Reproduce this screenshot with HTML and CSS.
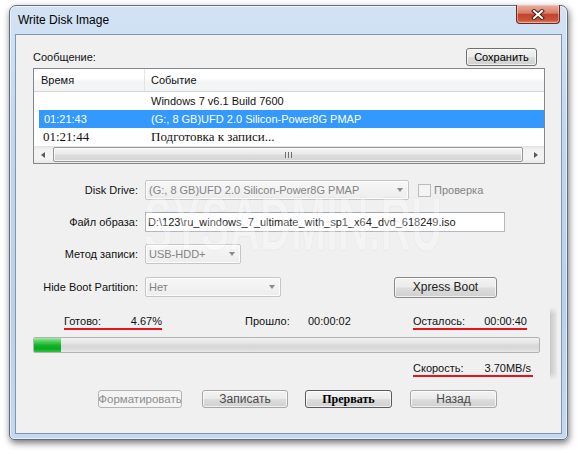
FILE: index.html
```html
<!DOCTYPE html>
<html lang="ru">
<head>
<meta charset="utf-8">
<title>Write Disk Image</title>
<link rel="stylesheet" href="styles.css">
</head>
<body>
<div class="window">
  <div class="titlebar">
    <span class="title">Write Disk Image</span>
    <div class="close">
      <svg width="14" height="11" viewBox="0 0 14 11">
        <path d="M3 2 L11 9 M11 2 L3 9" stroke="#4a1d16" stroke-width="4" stroke-linecap="square" fill="none"/>
        <path d="M3 2 L11 9 M11 2 L3 9" stroke="#ffffff" stroke-width="2" stroke-linecap="square" fill="none"/>
      </svg>
    </div>
  </div>
  <div class="client">
    <div class="msg-row">
      <span>Сообщение:</span>
      <div class="btn save">Сохранить</div>
    </div>
    <div class="list">
      <div class="lhead">
        <div class="h1">Время</div>
        <div class="h2">Событие</div>
      </div>
      <div class="row">
        <div class="c1"></div>
        <div class="c2">Windows 7 v6.1 Build 7600</div>
      </div>
      <div class="row sel">
        <div class="c1">01:21:43</div>
        <div class="c2">(G:, 8 GB)UFD 2.0 Silicon-Power8G PMAP</div>
      </div>
      <div class="row serif">
        <div class="c1">01:21:44</div>
        <div class="c2">Подготовка к записи...</div>
      </div>
      <div class="hscroll">
        <div class="sbtn"><span class="tri-left"></span></div>
        <div class="thumb"><span class="grip"></span></div>
        <div class="strack"></div>
        <div class="sbtn"><span class="tri-right"></span></div>
      </div>
    </div>

    <div class="form">
      <div class="frow">
        <div class="flabel">Disk Drive:</div>
        <div class="combo w-drive"><span class="ctext">(G:, 8 GB)UFD 2.0 Silicon-Power8G PMAP</span><span class="carrow"></span></div>
        <div class="check"></div>
        <span class="check-label">Проверка</span>
      </div>
      <div class="frow">
        <div class="flabel">Файл образа:</div>
        <div class="input">D:\123\ru_windows_7_ultimate_with_sp1_x64_dvd_618249.iso</div>
      </div>
      <div class="frow">
        <div class="flabel">Метод записи:</div>
        <div class="combo w-method"><span class="ctext">USB-HDD+</span><span class="carrow"></span></div>
      </div>
      <div class="frow last">
        <div class="flabel">Hide Boot Partition:</div>
        <div class="combo w-hide"><span class="ctext">Нет</span><span class="carrow"></span></div>
        <div class="btn xpress">Xpress Boot</div>
      </div>
    </div>

    <div class="panel">
      <div class="pcontent">
        <div class="stats">
          <div class="g1 mark"><span>Готово:</span><span>4.67%</span></div>
          <span class="el-label">Прошло:</span>
          <span class="el-value">00:00:02</span>
          <div class="g2 mark"><span>Осталось:</span><span>00:00:40</span></div>
        </div>
        <div class="pbar"><div class="pfill" style="width:27px"></div></div>
        <div class="speed">
          <div class="g3 mark"><span>Скорость:</span><span>3.70MB/s</span></div>
        </div>
      </div>
      <div class="edge"></div>
    </div>

    <div class="buttons">
      <div class="btn b-format">Форматировать</div>
      <div class="btn soft b-write">Записать</div>
      <div class="btn b-stop">Прервать</div>
      <div class="btn soft b-back">Назад</div>
    </div>

    <div class="watermark">SYSADMIN.RU</div>
  </div>
</div>
</body>
</html>
```

FILE: styles.css
```css
html, body {
  margin: 0;
  padding: 0;
}
body {
  width: 580px;
  height: 454px;
  overflow: hidden;
  background: #ffffff;
  font-family: "Liberation Sans", Arial, sans-serif;
  font-size: 11px;
  color: #111;
}

.window {
  margin: 5px 0 0 9px;
  width: 559px;
  height: 435px;
  box-sizing: border-box;
  border: 1px solid #5d6f82;
  border-radius: 7px 7px 5px 5px;
  background: linear-gradient(#d3e3f4 0%, #c0d7ef 30%, #b9d1eb 70%, #c4d9ef 100%);
  padding: 0 5px 5px;
  box-shadow: 1px 3px 7px rgba(0, 0, 0, 0.55), inset 0 0 0 1px rgba(255, 255, 255, 0.6);
  display: flex;
  flex-direction: column;
}

.titlebar {
  height: 28px;
  display: flex;
  align-items: center;
  justify-content: space-between;
  padding-left: 3px;
}
.title {
  font-size: 12px;
  color: #000;
}
.close {
  align-self: flex-start;
  margin-top: -1px;
  margin-right: 2px;
  width: 44px;
  height: 19px;
  box-sizing: border-box;
  border: 1px solid #6a2b22;
  border-top: none;
  border-radius: 0 0 4px 4px;
  background: linear-gradient(#eab0a2 0%, #d87d68 45%, #c4432c 52%, #c9553a 85%, #de927a 100%);
  display: flex;
  align-items: center;
  justify-content: center;
  box-shadow: inset 0 0 0 1px rgba(255, 210, 200, 0.5);
}

.client {
  flex: 1;
  background: #f0f0f0;
  border: 1px solid #8295aa;
  position: relative;
}

/* message row */
.msg-row {
  display: flex;
  justify-content: space-between;
  align-items: center;
  margin: 13px 0 0 17px;
  width: 504px;
  height: 18px;
}

.btn {
  box-sizing: border-box;
  height: 18px;
  border: 1px solid #707070;
  border-radius: 3px;
  background: linear-gradient(#f3f3f3 0%, #ebebeb 48%, #dddddd 52%, #d0d0d0 100%);
  box-shadow: inset 0 0 0 1px rgba(255, 255, 255, 0.7);
  display: flex;
  align-items: center;
  justify-content: center;
  font-size: 11px;
  color: #000;
  white-space: nowrap;
  overflow: hidden;
}
.save { width: 71px; }

/* list */
.list {
  margin: 2px 0 0 17px;
  width: 512px;
  height: 96px;
  box-sizing: border-box;
  border: 1px solid #828790;
  background: #ffffff;
  display: flex;
  flex-direction: column;
}
.lhead {
  height: 23px;
  box-sizing: border-box;
  border-bottom: 1px solid #d5d5d5;
  background: linear-gradient(#ffffff 0%, #ffffff 45%, #f4f5f7 55%, #f3f4f6 100%);
  display: flex;
}
.h1 {
  width: 111px;
  box-sizing: border-box;
  padding-left: 7px;
  border-right: 1px solid #e3e3e3;
  display: flex;
  align-items: center;
}
.h2 {
  padding-left: 6px;
  display: flex;
  align-items: center;
}
.row {
  height: 18px;
  margin-left: 5px;
  display: flex;
  align-items: center;
  white-space: nowrap;
}
.row .c1 {
  width: 105px;
  box-sizing: border-box;
  padding-left: 5px;
}
.row .c2 {
  padding-left: 7px;
}
.row.sel {
  background: #3399ff;
  color: #ffffff;
}
.row.serif {
  font-family: "Liberation Serif", "Times New Roman", serif;
  font-size: 13px;
}
.row.serif .c1 { padding-left: 4px; }

.hscroll {
  height: 17px;
  display: flex;
  background: linear-gradient(#e4e4e4 0%, #f3f3f3 25%, #f3f3f3 75%, #e8e8e8 100%);
}
.sbtn {
  width: 17px;
  height: 17px;
  display: flex;
  align-items: center;
  justify-content: center;
}
.tri-left {
  width: 0;
  height: 0;
  border-top: 3.5px solid transparent;
  border-bottom: 3.5px solid transparent;
  border-right: 4px solid #5a5a5a;
}
.tri-right {
  width: 0;
  height: 0;
  border-top: 3.5px solid transparent;
  border-bottom: 3.5px solid transparent;
  border-left: 4px solid #5a5a5a;
}
.thumb {
  margin: 1px 0 1px 2px;
  width: 470px;
  height: 15px;
  box-sizing: border-box;
  border: 1px solid #979797;
  border-radius: 2px;
  background: linear-gradient(#f6f6f6 0%, #eaeaea 45%, #dcdcdc 55%, #d4d4d4 100%);
  box-shadow: inset 0 0 0 1px rgba(255, 255, 255, 0.7);
  display: flex;
  align-items: center;
  justify-content: center;
}
.grip {
  width: 7px;
  height: 6px;
  background: repeating-linear-gradient(to right, #6e6e6e 0, #6e6e6e 1px, #e6e6e6 1px, #e6e6e6 2px, transparent 2px, transparent 3px);
}
.strack { flex: 1; }

/* form */
.form {
  margin-top: 16px;
  display: flex;
  flex-direction: column;
  gap: 12px;
}
.frow {
  display: flex;
  align-items: center;
  height: 20px;
}
.frow.last { margin-top: 1px; }
.flabel {
  width: 122px;
  margin-right: 7px;
  text-align: right;
  white-space: nowrap;
}
.combo {
  box-sizing: border-box;
  height: 20px;
  border: 1px solid #c6c6c6;
  border-radius: 2px;
  background: linear-gradient(#f7f7f7, #ededed);
  box-shadow: inset 0 0 0 1px rgba(255, 255, 255, 0.8);
  color: #838383;
  display: flex;
  align-items: center;
  padding-left: 3px;
  white-space: nowrap;
}
.ctext { flex: 1; overflow: hidden; }
.carrow {
  width: 0;
  height: 0;
  margin-right: 5px;
  border-left: 3.5px solid transparent;
  border-right: 3.5px solid transparent;
  border-top: 4px solid #8a8a8a;
}
.w-drive { width: 264px; }
.w-method { width: 96px; }
.w-hide { width: 136px; }
.check {
  margin-left: 9px;
  width: 13px;
  height: 13px;
  box-sizing: border-box;
  border: 1px solid #bcbcbc;
  background: #f4f4f4;
}
.check-label {
  margin-left: 3px;
  color: #838383;
}
.input {
  box-sizing: border-box;
  width: 360px;
  height: 20px;
  border: 1px solid #b3b6bd;
  border-top-color: #a3a6ad;
  background: #ffffff;
  color: #222;
  display: flex;
  align-items: center;
  padding-left: 2px;
  white-space: nowrap;
}
.xpress {
  margin-left: 113px;
  width: 103px;
  height: 21px;
  font-size: 12px;
  border-color: #8a8a8a;
  color: #222;
}

/* progress panel */
.panel {
  display: flex;
  margin-top: 10px;
  height: 73px;
}
.pcontent {
  width: 534px;
  padding-top: 7px;
}
.edge {
  width: 7px;
  background:
    linear-gradient(#f0f0f0 0%, rgba(240, 240, 240, 0) 10%, rgba(240, 240, 240, 0) 90%, #f0f0f0 100%),
    linear-gradient(to right, #c8c8c8, #e7e7e7);
}
.stats {
  display: flex;
  height: 16px;
  line-height: 14px;
  white-space: nowrap;
}
.mark {
  box-sizing: border-box;
  display: flex;
  justify-content: space-between;
  border-bottom: 2px solid #e3151b;
  height: 16px;
}
.g1 { margin-left: 48px; width: 98px; }
.el-label { margin-left: 83px; width: 63px; }
.el-value { width: 105px; }
.g2 { width: 114px; }
.pbar {
  margin: 7px 0 0 17px;
  width: 507px;
  height: 16px;
  box-sizing: border-box;
  border: 1px solid #b2b2b2;
  border-radius: 2px;
  background: linear-gradient(#f2f2f2 0%, #e6e6e6 35%, #d6d6d6 55%, #dcdcdc 80%, #e9e9e9 100%);
  overflow: hidden;
}
.pfill {
  height: 100%;
  background: linear-gradient(#a6e8a8 0%, #5fd36a 20%, #17b52a 50%, #0aa71f 75%, #2fc243 100%);
}
.speed {
  display: flex;
  margin-top: 8px;
  line-height: 14px;
  white-space: nowrap;
}
.g3 { margin-left: 397px; width: 120px; padding-right: 2px; }

/* bottom buttons */
.buttons {
  display: flex;
  margin-top: 10px;
}
.b-format {
  margin-left: 82px;
  width: 84px;
  font-size: 11.5px;
  color: #8d8d8d;
  border-color: #b1b5b8;
  background: #f4f4f4;
  box-shadow: none;
  justify-content: center;
}
.b-write { margin-left: 20px; width: 86px; font-size: 12px; }
.b-stop {
  margin-left: 17px;
  width: 87px;
  font-family: "Liberation Serif", "Times New Roman", serif;
  font-size: 12px;
  font-weight: bold;
  border-color: #5a5a5a;
}
.b-back { margin-left: 18px; width: 87px; font-size: 12px; }
.soft {
  border-color: #a6a6a6;
  color: #4a4a4a;
}

/* watermark overlay */
.watermark {
  position: absolute;
  left: 128px;
  top: 151px;
  font-family: "Liberation Sans", Arial, sans-serif;
  font-weight: bold;
  font-size: 76px;
  line-height: 1;
  white-space: nowrap;
  color: rgba(255, 255, 255, 0.3);
  -webkit-text-stroke: 1px rgba(0, 0, 0, 0.04);
  transform: scaleX(0.56);
  transform-origin: left top;
  pointer-events: none;
}
```
